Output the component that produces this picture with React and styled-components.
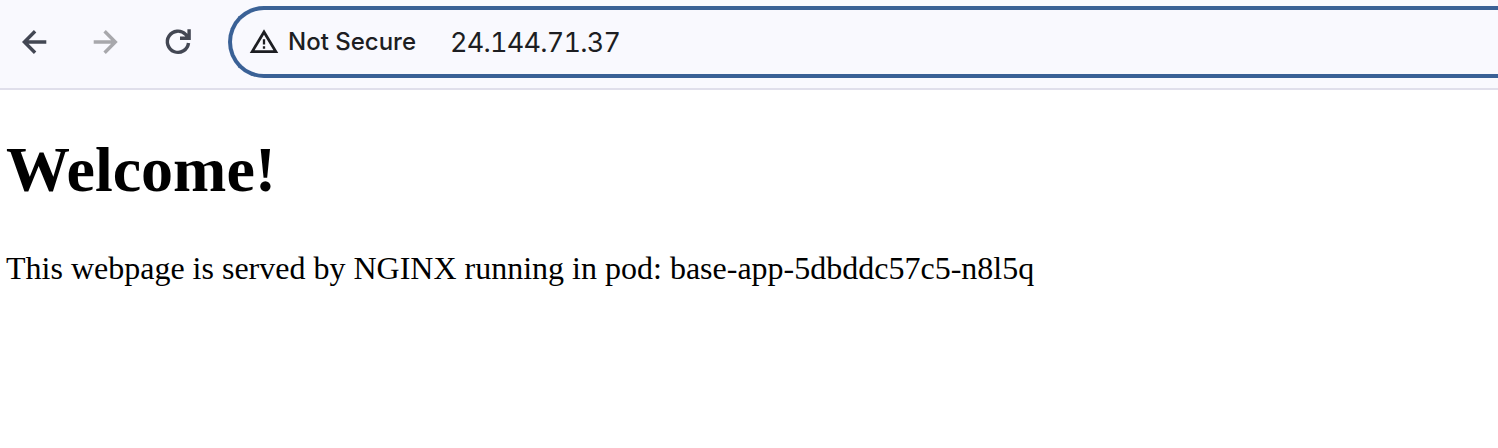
import React from "react";
import styled, { createGlobalStyle } from "styled-components";

const GlobalStyle = createGlobalStyle`
  * { box-sizing: border-box; }
  body { margin: 0; background: #fff; overflow: hidden; }
`;

const Window = styled.div`
  height: 448px;
  overflow: hidden;
`;

const Toolbar = styled.header`
  display: flex;
  height: 90px;
  padding-top: 6px;
  background: #f9f9fe;
  border-bottom: 2px solid #e0dfeb;
`;

const NavButtons = styled.nav`
  display: flex;
  width: 228px;
  flex: none;
  height: 72px;
  align-items: center;
  padding-left: 14px;
  gap: 32px;
`;

const NavButton = styled.button`
  display: flex;
  width: 40px;
  height: 40px;
  padding: 0;
  border: 0;
  background: none;
  align-items: center;
  justify-content: center;
  color: ${(p) => (p.disabled ? "#a8a8ac" : "#434753")};
`;

const AddressBar = styled.div`
  display: flex;
  flex: 1;
  height: 72px;
  align-items: center;
  padding-left: 17px;
  border: 4px solid #3a6196;
  border-right: 0;
  border-radius: 36px 0 0 36px;
  white-space: nowrap;
  color: #1d1e22;
`;

const SecurityChip = styled.div`
  display: flex;
  width: 201px;
  align-items: center;
  gap: 9px;
  font: 500 24px/32px Inter, sans-serif;
`;

const Url = styled.span`
  padding-top: 1px;
  font: 400 27px/32px Inter, sans-serif;
  font-variant-numeric: tabular-nums;
  letter-spacing: -0.75px;
`;

const Page = styled.main`
  padding: 0 6px;
  font-family: "Liberation Serif", serif;
  color: #000;
`;

const Title = styled.h1`
  margin: 43px 0 0;
  font-size: 64px;
  line-height: 74px;
`;

const Message = styled.p`
  margin: 43px 0 0;
  font-size: 32px;
  line-height: 37px;
  white-space: nowrap;
`;

const Icon = ({ size, children, width = 3.4 }) => (
  <svg width={size} height={size} viewBox={`0 0 ${size} ${size}`} fill="none" stroke="currentColor" strokeWidth={width}>
    {children}
  </svg>
);

export default function App() {
  return (
    <Window>
      <GlobalStyle />
      <Toolbar>
        <NavButtons>
          <NavButton aria-label="Back">
            <Icon size={40}><path d="M32.3 20H11M21.1 9.3L10.4 20L21.1 30.7" /></Icon>
          </NavButton>
          <NavButton aria-label="Forward" disabled>
            <Icon size={40}><path d="M7.7 20H29M18.6 9.3L29.3 20L18.6 30.7" /></Icon>
          </NavButton>
          <NavButton aria-label="Reload">
            <Icon size={40}><path d="M30.5 21A10.6 10.6 0 1 1 27.6 12.4L30.5 15.5M31.1 7.3V16.3H22" /></Icon>
          </NavButton>
        </NavButtons>
        <AddressBar>
          <SecurityChip>
            <Icon size={30} width={2.8}>
              <path d="M3.2 24.6L15 5L26.8 24.6Z" />
              <path d="M15 12.3V17.5M15 19.2V21.7" strokeWidth={2.3} />
            </Icon>
            Not Secure
          </SecurityChip>
          <Url>24.144.71.37</Url>
        </AddressBar>
      </Toolbar>
      <Page>
        <Title>Welcome!</Title>
        <Message>This webpage is served by NGINX running in pod: base-app-5dbddc57c5-n8l5q</Message>
      </Page>
    </Window>
  );
}
